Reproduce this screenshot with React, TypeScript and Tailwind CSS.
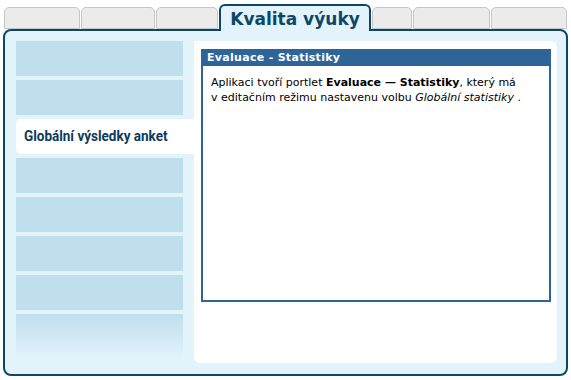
export default function App() {
  const verdana = { fontFamily: '"DejaVu Sans", Verdana, sans-serif' }
  const narrow = { fontFamily: 'Roboto, "Liberation Sans", sans-serif' }

  return (
    <div className="w-[571px] h-[380px] bg-white relative overflow-hidden">
      {/* tabs */}
      <div className="flex items-end h-[29px] pl-[4px] gap-[1px]">
        <div className="w-[76px] h-[22px] rounded-t-[5px] border border-[#c6c6c6] bg-[#ebebeb]" />
        <div className="w-[74px] h-[22px] rounded-t-[5px] border border-[#c6c6c6] bg-[#ebebeb]" />
        <div className="w-[62px] h-[22px] rounded-t-[5px] border border-[#c6c6c6] bg-[#ebebeb]" />
        <div className="relative z-10 w-[152px] h-[27px] -mb-[2px] rounded-t-[6px] border-2 border-b-0 border-[#0e4764] bg-[#e3f3fc] flex items-start justify-center pt-[3px]">
          <span className="text-[17px] leading-[20px] font-bold text-[#0e4764]" style={verdana}>Kvalita výuky</span>
        </div>
        <div className="w-[40px] h-[22px] rounded-t-[5px] border border-[#c6c6c6] bg-[#ebebeb]" />
        <div className="w-[77px] h-[22px] rounded-t-[5px] border border-[#c6c6c6] bg-[#ebebeb]" />
        <div className="w-[76px] h-[22px] rounded-t-[5px] border border-[#c6c6c6] bg-[#ebebeb]" />
      </div>

      {/* main panel */}
      <div className="ml-[3px] w-[565px] h-[347px] rounded-[8px] border-2 border-[#0e4764] bg-[#e3f3fc] flex pt-[10px] pl-[11px] pr-[9px] pb-[11px]">
        <div className="w-[178px] flex flex-col gap-[4px]">
          <div className="w-[167px] h-[35px] bg-[#c0dfec]" />
          <div className="w-[167px] h-[35px] bg-[#c0dfec]" />
          <div className="w-[178px] h-[35px] bg-white rounded-l-[5px] flex items-center pl-[8px]">
            <span className="inline-block origin-left scale-x-[0.9] whitespace-nowrap text-[15px] font-bold text-[#0c3a58]" style={narrow}>Globální výsledky anket</span>
          </div>
          <div className="w-[167px] h-[35px] bg-[#c0dfec]" />
          <div className="w-[167px] h-[35px] bg-[#c0dfec]" />
          <div className="w-[167px] h-[35px] bg-[#c0dfec]" />
          <div className="w-[167px] h-[35px] bg-[#c0dfec]" />
          <div className="w-[167px] h-[46px] bg-gradient-to-b from-[#c0dfec] to-[#e3f3fc]" />
        </div>

        <div className="flex-1 bg-white rounded-r-[6px] rounded-bl-[6px] pt-[8px] pl-[7px] pr-[6px]">
          <div className="h-[253px] border-2 border-[#2d6598] flex flex-col">
            <div className="h-[15px] bg-[#2d6598] flex items-center pl-[4px]">
              <span className="text-[11px] font-bold text-white tracking-[0.3px]" style={verdana}>Evaluace - Statistiky</span>
            </div>
            <div className="pt-[9px] pl-[8px] text-[11px] leading-[15px] text-black" style={verdana}>
              Aplikaci tvoří portlet <b>Evaluace — Statistiky</b>, který má<br />
              v editačním režimu nastavenu volbu <i>Globální statistiky</i> .
            </div>
          </div>
        </div>
      </div>
    </div>
  )
}
